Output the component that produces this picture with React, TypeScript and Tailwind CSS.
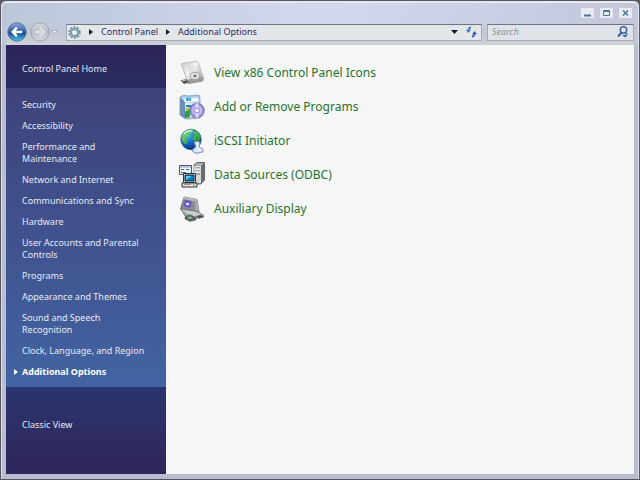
import React from "react";

const categories = [
  "Security",
  "Accessibility",
  "Performance and Maintenance",
  "Network and Internet",
  "Communications and Sync",
  "Hardware",
  "User Accounts and Parental Controls",
  "Programs",
  "Appearance and Themes",
  "Sound and Speech Recognition",
  "Clock, Language, and Region",
  "Additional Options",
];

function DriveIcon() {
  return (
    <svg width="26" height="26" viewBox="0 0 26 26" aria-hidden="true">
      <defs>
        <linearGradient id="plate" x1="0" y1="0" x2="1" y2="1">
          <stop offset="0" stopColor="#c4c4c4" />
          <stop offset=".4" stopColor="#f2f2f2" />
          <stop offset="1" stopColor="#999" />
        </linearGradient>
      </defs>
      <path d="M2.500 4.500Q2.500 3.600 3.500 3.500L17 1.200q1.500 0 2 1.300L24.500 18l-1 3-14 2.500z" fill="url(#plate)" stroke="#b0b0b0" strokeWidth=".8" />
      <path d="M9 19.500l15-2.500.5 3-1 1.500-14 2.500z" fill="#9a9a9a" />
      <path d="M8 6l7-.8 2.500 8-7 1z" fill="#dfe2e0" />
      <ellipse cx="16" cy="16" rx="4.500" ry="3.500" fill="#e6e6e6" stroke="#a0a0a0" />
      <ellipse cx="16" cy="16" rx="1.600" ry="1.300" fill="#666" />
      <path d="M1.500 20.500L7 19l3 3.500L5 24z" fill="#565656" />
      <path d="M3 21l4-1" stroke="#ccc" />
    </svg>
  );
}

function ProgramsIcon() {
  return (
    <svg width="26" height="26" viewBox="0 0 26 26" aria-hidden="true">
      <defs>
        <radialGradient id="disc">
          <stop offset=".15" stopColor="#fff" />
          <stop offset=".5" stopColor="#c4bdf0" />
          <stop offset=".75" stopColor="#aaa0e7" />
          <stop offset="1" stopColor="#7469bd" />
        </radialGradient>
      </defs>
      <path d="M1 3l4-2 4 1 11-1 1 4v19l-14 1-6-4z" fill="#a9c8e5" stroke="#7899bb" strokeWidth=".8" />
      <path d="M1 4l5 3v18l-5-4z" fill="#6b8eb9" />
      <path d="M4 4.500l15-1 1 4-14 1z" fill="#eef9ff" />
      <path d="M7 4h5v3H7z" fill="#4aaad9" />
      <path d="M6 9h13v14H6z" fill="#dbecf6" />
      <path d="M7 11h9v2H7z" fill="#3b78cc" />
      <path d="M6 15l5-2v10l-5 1z" fill="#30a338" />
      <path d="M6 15l5-2v2l-5 3z" fill="#a4d860" />
      <circle cx="18" cy="16.500" r="7.300" fill="url(#disc)" stroke="#776ab0" strokeWidth=".8" />
      <path d="M18 16.500l-2-7a7 7 0 0 1 4 0zM18 16.500l2 7a7 7 0 0 1-4 0z" fill="#fff" opacity=".6" />
      <circle cx="18" cy="16.500" r="2.500" fill="#e2dcff" stroke="#8075be" strokeWidth=".8" />
      <circle cx="18" cy="16.500" r="1" fill="#fff" />
    </svg>
  );
}

function GlobeIcon() {
  return (
    <svg width="26" height="26" viewBox="0 0 26 26" aria-hidden="true">
      <defs>
        <radialGradient id="sea" cx=".3" cy=".25" r=".8">
          <stop offset="0" stopColor="#5fcff8" />
          <stop offset=".5" stopColor="#176fcb" />
          <stop offset="1" stopColor="#092a79" />
        </radialGradient>
        <linearGradient id="land" x1="0" y1="0" x2="1" y2="1">
          <stop offset="0" stopColor="#85e48d" />
          <stop offset="1" stopColor="#16802b" />
        </linearGradient>
      </defs>
      <circle cx="12" cy="11.500" r="10.300" fill="url(#sea)" stroke="#174c84" strokeWidth=".6" />
      <path d="M3 7Q7 1 14 1.500l1 2-4 2-1 3-3 2 2 4-3 2-3-4q-1-3 0-5.500zM14 4l3-1q4 2 5 7l-1 4-3-2-2 2-3-4 2-2z" fill="url(#land)" />
      <path d="M5 6q3-4 8-3" stroke="#d5ffe5" strokeWidth="1.500" fill="none" opacity=".8" />
      <path d="M15 14l4-1 2 2-1 4 4 2v3l-7 1.500-4-2.500 2-3 2-1z" fill="#cad8ee" stroke="#7088b4" strokeWidth=".8" />
      <path d="M17 15l2 0-1 5 4 2M15 22l3 1 4-1" fill="none" stroke="#f4faff" strokeWidth="1.300" />
    </svg>
  );
}

function DataIcon() {
  return (
    <svg width="26" height="26" viewBox="0 0 26 26" aria-hidden="true">
      <path d="M15 3l3-2.500h7.500V18L22 22h-7z" fill="#b0b0b0" stroke="#444" strokeWidth=".8" />
      <path d="M15 4h7v17h-7z" fill="#d7d7d7" />
      <path d="M22 4l3.500-3.500V18L22 21z" fill="#6c6c6c" />
      <path d="M16 6h5M16 9h5M16 12h5" stroke="#777" />
      <path d="M16 7h5M16 10h5" stroke="#fff" />
      <path d="M.5 3.500h12v9H.5z" fill="#edf2f4" stroke="#555" />
      <path d="M1 4h11v2H1z" fill="#b9c9ed" />
      <path d="M2 7h3v1H2zm5 0h3v1H7zM2 10h5v1H2z" fill="#4567b7" />
      <path d="M4.500 11.500h12v9h-12z" fill="#e3e3df" stroke="#333" />
      <path d="M6 13h9v6H6z" fill="#087abf" stroke="#12334b" />
      <path d="M7 14h6l-6 4z" fill="#58cbec" />
      <path d="M3 21h15v4H3z" fill="#e4e4df" stroke="#333" />
      <path d="M5 22.500h7" stroke="#999" />
      <path d="M14 23h2" stroke="#31a333" />
    </svg>
  );
}

function DisplayIcon() {
  return (
    <svg width="26" height="26" viewBox="0 0 26 26" aria-hidden="true">
      <path d="M5 1l13 2.500 2 12L1.500 13z" fill="#8b8c91" stroke="#66676b" strokeWidth=".8" />
      <path d="M5 1l13 2.500-.5 2L4 3z" fill="#bdbec2" />
      <path d="M6 3.500l7 2-2 6.500-7-2z" fill="#695dcc" />
      <path d="M7 6l4 1-1 3-4-1z" fill="#e4e1ff" stroke="#493baf" strokeWidth=".7" />
      <path d="M16 5l2-1.500 2.500 12-4-.5z" fill="#aaabad" />
      <path d="M1.500 13l16 2 7 4v2l-10 2L6 20z" fill="#a0a2a6" stroke="#6f7175" strokeWidth=".7" />
      <path d="M2.500 13.500l14 2.500 7 3-11 1.500z" fill="#cdced1" />
      <path d="M6 20.500l5-2 6 3v2.500l-6 1.500-5-2.500z" fill="#55605a" stroke="#777" strokeWidth=".6" />
      <path d="M8 21.500l3-1 3 1.500-3 1z" fill="#7ed477" />
      <path d="M17 20l5-1 3 2-5 1.500z" fill="#4b5052" />
    </svg>
  );
}

const items = [
  { label: "View x86 Control Panel Icons", Icon: DriveIcon },
  { label: "Add or Remove Programs", Icon: ProgramsIcon },
  { label: "iSCSI Initiator", Icon: GlobeIcon },
  { label: "Data Sources (ODBC)", Icon: DataIcon },
  { label: "Auxiliary Display", Icon: DisplayIcon },
];

function Triangle({ className }: { className: string }) {
  return (
    <svg width="4" height="6" viewBox="0 0 4 6" className={className} aria-hidden="true">
      <path d="M0 0l4 3-4 3z" fill="currentColor" />
    </svg>
  );
}

function WindowButton({ label, children }: { label: string; children: React.ReactNode }) {
  return (
    <button aria-label={label} className="flex h-3 w-[15px] items-center justify-center border border-[#c4c8d6] bg-[#e7eaf0]">
      <svg width="9" height="10" viewBox="0 0 9 10" fill="none" stroke="#467796" aria-hidden="true">
        {children}
      </svg>
    </button>
  );
}

function NavButton({ label, forward = false }: { label: string; forward?: boolean }) {
  return (
    <button aria-label={label} className="shrink-0">
      <svg width="20" height="20" viewBox="0 0 21 21" aria-hidden="true">
        <defs>
          <linearGradient id="blueBall" x1="0" y1="0" x2="0" y2="1">
            <stop offset="0" stopColor="#8ba9d6" />
            <stop offset=".45" stopColor="#3563b0" />
            <stop offset=".55" stopColor="#1b4799" />
            <stop offset="1" stopColor="#45c9ee" />
          </linearGradient>
          <linearGradient id="greyBall" x1="0" y1="0" x2="0" y2="1">
            <stop offset="0" stopColor="#d5d9df" />
            <stop offset=".5" stopColor="#b8bec8" />
            <stop offset="1" stopColor="#d4d9df" />
          </linearGradient>
        </defs>
        <circle cx="10.500" cy="10.500" r="9.700" fill={forward ? "url(#greyBall)" : "url(#blueBall)"} stroke={forward ? "#9ca3af" : "#5f7495"} />
        <path
          d={forward ? "M5 10.500h10M10.500 6l4.500 4.500-4.500 4.500" : "M16 10.500H6M10.500 6L6 10.500l4.500 4.500"}
          fill="none"
          stroke={forward ? "#dce0e6" : "#fff"}
          strokeWidth="2.500"
        />
      </svg>
    </button>
  );
}

export default function App() {
  return (
    <div className="bg-[#5d5d6a] font-['Noto_Sans','Open_Sans',sans-serif] text-[9px] leading-3">
      <div className="flex min-h-screen flex-col rounded-t-md border border-[#55545f] bg-[#b9bdd1]">
        <header className="rounded-t-md border-x border-t-2 border-[#e6e8f1] bg-linear-to-r from-[#bcc6d9] via-[#d3d8ed] to-[#c3c7da] px-1">
          <div className="flex h-[19px] items-center justify-end gap-1 pr-px">
            <WindowButton label="Minimize">
              <path d="M1 7.500h7" strokeWidth="2" />
            </WindowButton>
            <WindowButton label="Maximize">
              <path d="M1.500 2.500h6v5h-6zM1.500 3.500h6" />
            </WindowButton>
            <WindowButton label="Close">
              <path d="M2 2.500l5 5M7 2.500l-5 5" strokeWidth="1.500" />
            </WindowButton>
          </div>
          <div className="flex h-[23px] items-center bg-linear-to-b from-[#bdc5d000] via-[#c2c9d4] to-[#cdd1d8] pb-[3px] pl-px">
            <NavButton label="Back" />
            <span className="w-[3px]" />
            <NavButton label="Forward" forward />
            <button aria-label="Recent pages" className="flex w-2 shrink-0 justify-center">
              <svg width="7" height="4" viewBox="0 0 7 4" aria-hidden="true">
                <path d="M.5 .5h6L3.500 3.500z" fill="#f0f2f5" stroke="#8b93a0" strokeWidth=".6" />
              </svg>
            </button>
            <span className="w-2" />
            <nav aria-label="Location" className="flex h-[17px] min-w-0 flex-1 items-center border border-[#a6aab4] border-t-[#71747d] bg-[#e4e7ea] pl-px text-[#2b2863]">
              <svg width="13" height="13" viewBox="0 0 13 13" aria-hidden="true">
                <circle cx="6.500" cy="6.500" r="5.200" fill="none" stroke="#6d8b9e" strokeWidth="2" strokeDasharray="2 1.267" />
                <circle cx="6.500" cy="6.500" r="3.600" fill="#cce0e9" stroke="#7e9dae" strokeWidth="2" />
                <circle cx="6.500" cy="6.500" r="1.500" fill="#f3fafc" />
              </svg>
              <Triangle className="mx-2 text-[#171438]" />
              <a href="#control-panel">Control Panel</a>
              <Triangle className="mx-2 text-[#171438]" />
              <a href="#additional-options">Additional Options</a>
              <button aria-label="Previous locations" className="ml-auto">
                <svg width="7" height="4" viewBox="0 0 7 4" aria-hidden="true">
                  <path d="M0 0h7L3.500 4z" fill="#171438" />
                </svg>
              </button>
              <button aria-label="Refresh" className="mr-1 ml-2">
                <svg width="11" height="12" viewBox="0 0 12 12" aria-hidden="true">
                  <path d="M5.500 1Q2.700 1 2.700 5" fill="none" stroke="#3e7bb8" strokeWidth="1.800" />
                  <path d="M0 3.500h5.500L2.700 7z" fill="#3e7bb8" />
                  <path d="M6.500 11q2.800 0 2.800-4" fill="none" stroke="#375fa5" strokeWidth="1.800" />
                  <path d="M6.500 8.500H12L9.300 5z" fill="#375fa5" />
                </svg>
              </button>
            </nav>
            <span className="w-[5px]" />
            <div className="flex h-[17px] w-[147px] items-center border border-[#a6aab4] border-t-[#71747d] bg-[#e0e3e8] px-1">
              <input
                type="search"
                aria-label="Search"
                placeholder="Search"
                className="min-w-0 flex-1 bg-transparent italic outline-none placeholder:text-[#8b8e96]"
              />
              <button aria-label="Start search">
                <svg width="12" height="12" viewBox="0 0 12 12" fill="none" stroke="#3b66a4" aria-hidden="true">
                  <circle cx="6.500" cy="4" r="3.200" strokeWidth="1.500" />
                  <path d="M4.500 6.500L1 10.500" strokeWidth="2" />
                  <path d="M5 9h6L8 11.500z" fill="#3b66a4" stroke="none" />
                  <path d="M8 6.500l2.500 2" strokeWidth="1.500" />
                </svg>
              </button>
            </div>
          </div>
        </header>
        <div className="flex flex-1 border-x border-[#dfe2ed] px-1 pb-[5px]">
          <aside className="flex w-40 shrink-0 flex-col bg-[#2b2b61] text-[#e6e9f4]">
            <div className="flex h-[43px] items-center bg-linear-to-b from-[#2d2559] to-[#292c62] px-4 pt-1">
              <a href="#home">Control Panel Home</a>
            </div>
            <nav aria-label="Categories" className="bg-linear-to-b from-[#3e4379] via-[#40528f] to-[#4264a2] px-4 pt-[11px] pb-[9px]">
              <ul className="flex flex-col gap-[9px]">
                {categories.map((name) => {
                  const current = name === "Additional Options";
                  return (
                    <li key={name} className={current ? "relative font-bold text-white" : ""}>
                      {current && <Triangle className="absolute top-[3px] -left-2" />}
                      <a href="#category" aria-current={current ? "page" : undefined} className="block">
                        {name}
                      </a>
                    </li>
                  );
                })}
              </ul>
            </nav>
            <div className="flex-1 bg-linear-to-b from-[#29366e] to-[#30255a] px-4 pt-8">
              <a href="#classic">Classic View</a>
            </div>
          </aside>
          <main className="min-w-0 flex-1 bg-[#f6f6f6] px-[13px] pt-[15px]">
            <ul className="flex flex-col gap-2 text-xs leading-5 text-[#24752f]">
              {items.map(({ label, Icon }) => (
                <li key={label}>
                  <a href="#item" className="flex items-center gap-[9px]">
                    <Icon />
                    {label}
                  </a>
                </li>
              ))}
            </ul>
          </main>
        </div>
      </div>
    </div>
  );
}
